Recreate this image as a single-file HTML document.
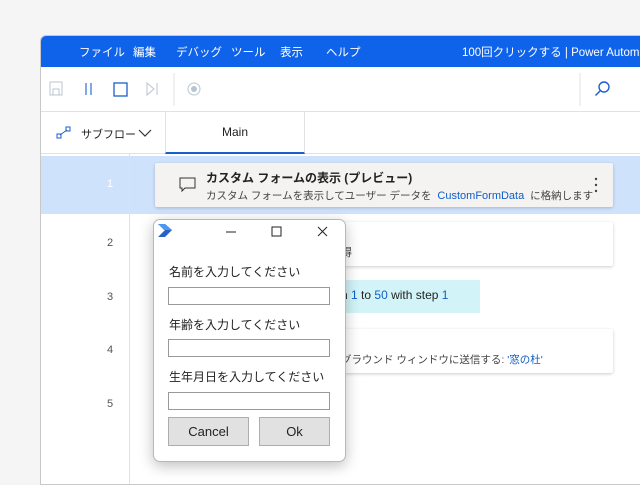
<!DOCTYPE html>
<html><head><meta charset="utf-8"><style>
*{box-sizing:border-box;margin:0;padding:0}
body{width:640px;height:480px;overflow:hidden;background:#f5f5f5;font-family:"Liberation Sans","Noto Sans CJK JP",sans-serif;position:relative;font-size:12px;color:#222;white-space:nowrap}
.win{position:absolute;left:40px;top:35px;width:610px;height:450px;background:#fff;border:1px solid #c8c8c8;border-radius:6px 0 0 0;overflow:hidden}
.title{position:absolute;left:0;top:0;width:100%;height:31px;background:#0f62ea;color:#fff;font-size:11.5px}
.title span{position:absolute;top:8px}
.tb{position:absolute;top:31px;left:0;width:100%;height:45px;border-bottom:1px solid #e1e1e1}
.tabs{position:absolute;top:76px;left:0;width:100%;height:42px;border-bottom:1px solid #e1e1e1}
.gut{position:absolute;left:0;top:118px;width:89px;height:340px;border-right:1px solid #e1e1e1}
.num{position:absolute;left:66px;font-size:11px;color:#555}
.card{position:absolute;background:#fff;box-shadow:0 1px 3px rgba(0,0,0,.2);border-radius:2px}
.dlg{position:absolute;left:153px;top:219px;width:193px;height:243px;background:#fff;border:1px solid #b8b8b8;border-radius:7px;box-shadow:0 4px 14px rgba(0,0,0,.25)}
.lab{position:absolute;left:15px;font-size:12px;color:#222}
.inp{position:absolute;left:14px;width:162px;height:18px;border:1px solid #999;background:#fff}
.btn{position:absolute;top:197px;height:29px;background:#e1e1e1;border:1px solid #adadad;font-size:13px;text-align:center;line-height:27px}
.blue{color:#0f5ec8}
</style></head><body>
<div class="win">
 <div class="title">
  <span style="left:38px">ファイル</span><span style="left:92px">編集</span><span style="left:135px">デバッグ</span><span style="left:190px">ツール</span><span style="left:239px">表示</span><span style="left:285px">ヘルプ</span>
  <span style="left:421px">100回クリックする | Power Automate</span>
 </div>
 <div class="tb">
  <svg width="610" height="45" style="position:absolute;left:0;top:0">
   <rect x="9" y="15" width="12" height="13" fill="none" stroke="#b9c4d2"/><rect x="12" y="22" width="6" height="6" fill="none" stroke="#b9c4d2"/>
   <path d="M45 16v12M50 16v12" stroke="#2a6fd6" stroke-width="1.2"/>
   <rect x="73" y="16" width="13" height="13" fill="none" stroke="#1a5fd0" stroke-width="1.3"/>
   <path d="M106 16l7 6-7 6zM116 16v12" fill="none" stroke="#b9c4d2"/>
   <path d="M133 6v33" stroke="#e1e1e1"/>
   <circle cx="153" cy="22" r="6" fill="none" stroke="#b9c4d2"/><circle cx="153" cy="22" r="3" fill="#b9c4d2"/>
   <path d="M539 6v33" stroke="#e1e1e1"/>
   <circle cx="563" cy="20" r="5" fill="none" stroke="#1a5fd0" stroke-width="1.4"/><path d="M559.5 23.5l-5 5" stroke="#1a5fd0" stroke-width="1.4"/>
  </svg>
 </div>
 <div class="tabs">
  <svg width="20" height="14" style="position:absolute;left:15px;top:14px"><rect x="1" y="8" width="4" height="4" fill="none" stroke="#1a5fd0"/><rect x="10" y="1" width="4" height="4" fill="none" stroke="#1a5fd0"/><path d="M4 9l7-5" stroke="#1a5fd0"/></svg>
  <span style="position:absolute;left:40px;top:14px;font-size:11px">サブフロー</span>
  <svg width="14" height="10" style="position:absolute;left:97px;top:16px"><path d="M1 2l6 6 6-6" fill="none" stroke="#333" stroke-width="1.2"/></svg>
  <div style="position:absolute;left:124px;top:0;width:140px;height:42px;border-left:1px solid #e1e1e1;border-right:1px solid #e1e1e1;border-bottom:2px solid #1a5fd0;text-align:center;line-height:40px;font-size:12px">Main</div>
 </div>
 <div style="position:absolute;left:0;top:120px;width:610px;height:58px;background:#cfe2fb"></div>
 <div class="gut"></div>
 <span class="num" style="top:142px;color:#fff">1</span>
 <span class="num" style="top:201px">2</span>
 <span class="num" style="top:255px">3</span>
 <span class="num" style="top:308px">4</span>
 <span class="num" style="top:362px">5</span>
 <div class="card" style="left:114px;top:127px;width:458px;height:44px;background:#f4f3f2">
  <svg width="18" height="16" style="position:absolute;left:24px;top:14px"><path d="M1 1h15v10H6l-3 3v-3H1z" fill="none" stroke="#333"/></svg>
  <div style="position:absolute;left:51px;top:6px;font-size:12px;font-weight:bold">カスタム フォームの表示 (プレビュー)</div>
  <div style="position:absolute;left:51px;top:25px;font-size:10.5px;color:#444">カスタム フォームを表示してユーザー データを <span class="blue" style="margin:0 3px;font-size:11px">CustomFormData</span> に格納します</div>
  <svg width="4" height="16" style="position:absolute;left:439px;top:14px"><circle cx="2" cy="2" r="1.2" fill="#444"/><circle cx="2" cy="8" r="1.2" fill="#444"/><circle cx="2" cy="14" r="1.2" fill="#444"/></svg>
 </div>
 <div class="card" style="left:290px;top:186px;width:282px;height:44px"><span style="position:absolute;left:10px;top:22px;color:#444;font-size:11px">得</span></div>
 <div style="position:absolute;left:290px;top:244px;width:149px;height:33px;background:#d2f4f8"><span style="position:absolute;left:10px;top:8px;font-size:12px">n <span class="blue">1</span> to <span class="blue">50</span> with step <span class="blue">1</span></span></div>
 <div class="card" style="left:290px;top:293px;width:282px;height:44px"><span style="position:absolute;left:10px;top:23px;font-size:10.5px;color:#444">グラウンド ウィンドウに送信する: <span class="blue">'窓の杜'</span></span></div>
</div>
<div class="dlg">
 <svg width="18" height="14" style="position:absolute;left:4px;top:4px"><path d="M0 0h7l7 6-7 7H0l7-7z" fill="#2563c7"/><path d="M0 0h7l7 6H6z" fill="#4c9af0"/></svg>
 <svg width="193" height="24" style="position:absolute;left:0;top:0"><path d="M72 12h10" stroke="#222"/><rect x="118" y="7" width="9" height="9" fill="none" stroke="#222"/><path d="M164 7l9 9M173 7l-9 9" stroke="#222"/></svg>
 <div class="lab" style="top:43px">名前を入力してください</div>
 <div class="inp" style="top:67px"></div>
 <div class="lab" style="top:96px">年齢を入力してください</div>
 <div class="inp" style="top:119px"></div>
 <div class="lab" style="top:148px">生年月日を入力してください</div>
 <div class="inp" style="top:172px"></div>
 <div class="btn" style="left:14px;width:81px">Cancel</div>
 <div class="btn" style="left:105px;width:71px">Ok</div>
</div>
</body></html>
